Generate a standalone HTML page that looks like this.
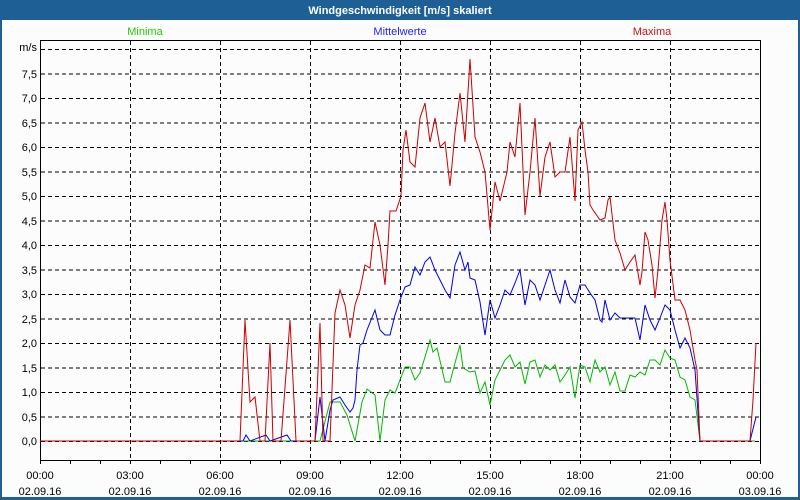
<!DOCTYPE html>
<html><head><meta charset="utf-8"><style>
html,body{margin:0;padding:0;background:#fff;}
svg{display:block;}
text{font-family:"Liberation Sans","DejaVu Sans",sans-serif;font-size:11px;}
</style></head><body>
<svg width="800" height="500" viewBox="0 0 800 500" xmlns="http://www.w3.org/2000/svg">
<rect x="0" y="0" width="800" height="500" fill="#1e6096"/>
<rect x="2" y="20" width="796" height="477" fill="#fcfcfc"/>
<text x="400" y="14" fill="#fff" font-weight="bold" text-anchor="middle">Windgeschwindigkeit [m/s] skaliert</text>
<text x="145" y="35" fill="#22cc00" text-anchor="middle">Minima</text>
<text x="400" y="35" fill="#2222ee" text-anchor="middle">Mittelwerte</text>
<text x="652" y="35" fill="#cc1111" text-anchor="middle">Maxima</text>
<g stroke="#000" stroke-width="1" stroke-dasharray="4,3" fill="none">
<path d="M41 49.5H760M41 74H760M41 98.5H760M41 123H760M41 147.5H760M41 172H760M41 196.5H760M41 221H760M41 245.5H760M41 270H760M41 294.5H760M41 319H760M41 343.5H760M41 368H760M41 392.5H760M41 417H760M41 441.5H760"/>
<path d="M130.5 41V460M220.5 41V460M310.5 41V460M400.5 41V460M490.5 41V460M580.5 41V460M670.5 41V460"/>
</g>
<rect x="40.5" y="40.5" width="720" height="420" fill="none" stroke="#000"/>
<g stroke="#000" stroke-width="1">
<path d="M70.5 460v4M100.5 460v4M130.5 460v4M160.5 460v4M190.5 460v4M220.5 460v4M250.5 460v4M280.5 460v4M310.5 460v4M340.5 460v4M370.5 460v4M400.5 460v4M430.5 460v4M460.5 460v4M490.5 460v4M520.5 460v4M550.5 460v4M580.5 460v4M610.5 460v4M640.5 460v4M670.5 460v4M700.5 460v4M730.5 460v4M760.5 460v4M40.5 460v4"/>
</g>
<g fill="#000" text-anchor="end">
<text x="37" y="51">m/s</text>
<text x="37" y="78">7,5</text><text x="37" y="102">7,0</text><text x="37" y="127">6,5</text><text x="37" y="151">6,0</text>
<text x="37" y="176">5,5</text><text x="37" y="200">5,0</text><text x="37" y="225">4,5</text><text x="37" y="249">4,0</text>
<text x="37" y="274">3,5</text><text x="37" y="298">3,0</text><text x="37" y="323">2,5</text><text x="37" y="347">2,0</text>
<text x="37" y="372">1,5</text><text x="37" y="396">1,0</text><text x="37" y="421">0,5</text><text x="37" y="445">0,0</text>
</g>
<g fill="#000" text-anchor="middle">
<text x="40" y="479">00:00</text><text x="40" y="495">02.09.16</text>
<text x="130" y="479">03:00</text><text x="130" y="495">02.09.16</text>
<text x="220" y="479">06:00</text><text x="220" y="495">02.09.16</text>
<text x="310" y="479">09:00</text><text x="310" y="495">02.09.16</text>
<text x="400" y="479">12:00</text><text x="400" y="495">02.09.16</text>
<text x="490" y="479">15:00</text><text x="490" y="495">02.09.16</text>
<text x="580" y="479">18:00</text><text x="580" y="495">02.09.16</text>
<text x="670" y="479">21:00</text><text x="670" y="495">02.09.16</text>
<text x="760" y="479">00:00</text><text x="760" y="495">03.09.16</text>
</g>
<polyline fill="none" stroke="#00bb00" stroke-width="1" points="40,441 320,441 330,402 340,402 347,415 355,441 362,402 367,389 375,395 380,441 385,400 390,390 395,393 400,380 405,367 410,367 415,380 420,373 425,357 430,340 433,352 437,348 445,382 450,382 455,363 460,345 463,368 470,372 475,371 480,393 485,382 490,405 495,380 500,370 505,360 510,355 515,367 520,362 525,384 530,362 535,360 540,377 545,365 550,370 555,365 560,382 565,375 570,367 575,398 580,365 585,367 590,382 595,360 600,372 605,367 610,385 615,372 620,391 625,391 630,375 635,377 640,372 645,375 650,360 655,360 660,365 665,350 670,358 675,360 680,377 685,380 690,397 695,400 700,441 755,441"/>
<polyline fill="none" stroke="#0000ee" stroke-width="1" points="40,441 243,441 246,435 250,441 266,435 270,441 287,435 291,441 315,441 320,397 325,441 330,410 333,400 340,397 345,405 350,412 353,408 355,400 357,370 360,345 363,343 367,330 375,310 380,330 385,335 390,335 395,315 400,300 405,287 410,285 415,267 420,275 425,262 430,257 435,270 440,280 445,290 450,298 455,265 460,252 465,270 468,262 470,278 475,280 480,302 485,335 490,300 495,318 500,305 505,290 510,295 515,283 520,270 525,305 530,280 535,285 540,300 545,285 550,270 555,290 560,303 565,280 570,297 575,303 580,285 585,285 590,293 595,300 600,320 602,322 605,300 610,320 615,313 620,318 635,318 640,340 645,305 650,320 655,330 660,318 665,305 670,310 675,330 680,348 685,338 690,348 695,370 700,441 750,441 756,417"/>
<polyline fill="none" stroke="#cc0000" stroke-width="1" points="40,441 240,441 245,320 250,402 255,397 260,441 265,441 270,343 273,441 281,441 290,320 296,441 315,441 320,323 323,441 330,441 335,313 340,290 345,305 350,338 355,305 360,290 365,265 370,268 375,222 380,245 385,285 388,245 390,211 396,211 401,196 403,150 406,130 410,162 415,167 420,118 425,103 430,142 435,118 440,147 445,142 450,186 455,133 460,93 465,142 470,59 475,137 480,152 485,172 490,230 495,182 500,201 507,172 510,142 515,157 520,103 525,215 530,172 535,118 540,196 545,157 550,142 555,177 560,172 565,172 570,137 575,201 578,130 582,122 585,150 588,172 590,205 593,210 600,220 605,218 608,200 610,197 615,240 620,253 625,270 630,262 635,255 640,285 642,272 645,232 648,240 652,265 655,298 658,270 662,220 665,202 667,220 670,260 675,300 680,300 685,310 690,330 695,360 697,370 700,441 750,441 753,400 756,343"/>
</svg>
</body></html>
